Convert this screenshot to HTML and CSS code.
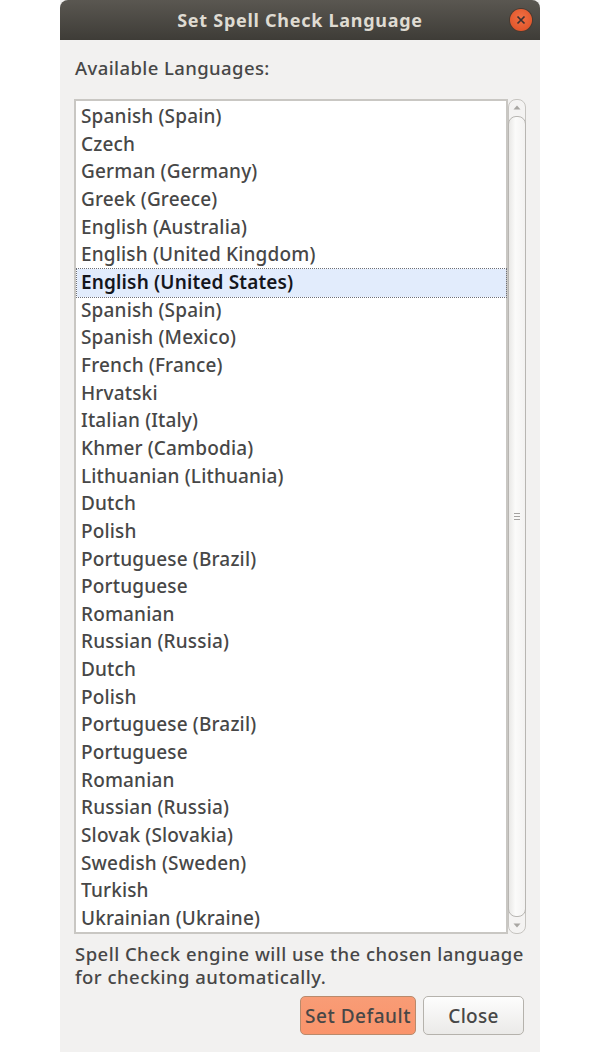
FILE: index.html
```html
<!DOCTYPE html>
<html lang="en">
<head>
<meta charset="utf-8">
<title>Set Spell Check Language</title>
<link rel="stylesheet" href="styles.css">
</head>
<body>
<div class="window">
  <header class="titlebar">
    <span class="title">Set Spell Check Language</span>
    <span class="close-btn">
      <svg width="10" height="10" viewBox="0 0 10 10"><path d="M1.5 1.5 8.5 8.5M8.5 1.5 1.5 8.5" stroke="#3c3030" stroke-width="1.7" fill="none"/></svg>
    </span>
  </header>
  <main class="content">
    <div class="heading">Available Languages:</div>
    <div class="list-row">
      <ul class="list">
        <li>Spanish (Spain)</li>
        <li>Czech</li>
        <li>German (Germany)</li>
        <li>Greek (Greece)</li>
        <li>English (Australia)</li>
        <li>English (United Kingdom)</li>
        <li class="selected">English (United States)</li>
        <li>Spanish (Spain)</li>
        <li>Spanish (Mexico)</li>
        <li>French (France)</li>
        <li>Hrvatski</li>
        <li>Italian (Italy)</li>
        <li>Khmer (Cambodia)</li>
        <li>Lithuanian (Lithuania)</li>
        <li>Dutch</li>
        <li>Polish</li>
        <li>Portuguese (Brazil)</li>
        <li>Portuguese</li>
        <li>Romanian</li>
        <li>Russian (Russia)</li>
        <li>Dutch</li>
        <li>Polish</li>
        <li>Portuguese (Brazil)</li>
        <li>Portuguese</li>
        <li>Romanian</li>
        <li>Russian (Russia)</li>
        <li>Slovak (Slovakia)</li>
        <li>Swedish (Sweden)</li>
        <li>Turkish</li>
        <li>Ukrainian (Ukraine)</li>
      </ul>
      <div class="scrollbar">
        <svg class="arrow" width="8" height="5" viewBox="0 0 8 5"><path d="M0.5 4.5 4 0.5 7.5 4.5Z" fill="#a8a6a2"/></svg>
        <div class="thumb">
          <span class="grip"></span><span class="grip"></span><span class="grip"></span>
        </div>
        <svg class="arrow" width="8" height="5" viewBox="0 0 8 5"><path d="M0.5 0.5 4 4.5 7.5 0.5Z" fill="#a8a6a2"/></svg>
      </div>
    </div>
    <p class="hint">Spell Check engine will use the chosen language<br>for checking automatically.</p>
    <div class="actions">
      <button class="btn btn-primary">Set Default</button>
      <button class="btn">Close</button>
    </div>
  </main>
</div>
</body>
</html>
```
FILE: styles.css
```css
* { box-sizing: border-box; }
html, body { margin: 0; padding: 0; background: #fff; }
body {
  width: 600px;
  height: 1052px;
  padding: 0 60px;
  font-family: "Noto Sans", "Open Sans", sans-serif;
  font-weight: 500;
  color: #474747;
}
.window {
  width: 480px;
  height: 1052px;
  background: #f2f1f0;
  display: flex;
  flex-direction: column;
}
.titlebar {
  height: 40px;
  flex: none;
  background: linear-gradient(#5a5751, #3e3c37);
  border-radius: 8px 8px 0 0;
  display: flex;
  align-items: center;
  justify-content: center;
  position: relative;
}
.title {
  font-size: 18px;
  font-weight: 700;
  color: #dfdbd2;
  letter-spacing: 0.72px;
}
.close-btn {
  position: absolute;
  right: 8px;
  top: 9px;
  width: 22px;
  height: 22px;
  border-radius: 50%;
  background: radial-gradient(circle at 50% 40%, #ef7044, #dd4d22);
  box-shadow: 0 0 0 1px #4a3a30;
  display: flex;
  align-items: center;
  justify-content: center;
}
.content {
  flex: 1;
  padding: 0 14px;
  display: flex;
  flex-direction: column;
}
.heading {
  font-size: 18.5px;
  line-height: 24px;
  margin-top: 16px;
  margin-left: 1px;
  letter-spacing: 0.4px;
}
.list-row {
  display: flex;
  margin-top: 19px;
  height: 835px;
}
.list {
  list-style: none;
  margin: 0;
  padding: 2px 0 0 1px;
  width: 434px;
  background: #fff;
  border: 2px solid #c9c7c3;
  font-size: 19px;
  letter-spacing: 0.16px;
}
.list li {
  height: 27.66px;
  line-height: 27.66px;
  padding-left: 4px;
  white-space: nowrap;
}
.list li.selected {
  background: #e2ecfc;
  color: #14161c;
  font-weight: 600;
  letter-spacing: 0.15px;
  outline: 1px dotted #6d6f78;
}
.scrollbar {
  width: 18px;
  border: 1px solid #c6c4c0;
  border-radius: 8px;
  background: #f4f3f2;
  display: flex;
  flex-direction: column;
  align-items: center;
  justify-content: space-between;
  padding: 5px 0;
}
.arrow { flex: none; }
.thumb {
  flex: 1;
  width: 18px;
  margin: 6px 0;
  background: linear-gradient(90deg, #e9e8e6, #fbfbfa 40%, #f3f2f1);
  border: 1px solid #b8b6b2;
  border-radius: 8px;
  display: flex;
  flex-direction: column;
  align-items: center;
  justify-content: center;
  gap: 2px;
}
.grip {
  width: 6px;
  height: 1px;
  background: #a4a2a0;
}
.hint {
  margin: 8px 0 0 1px;
  font-size: 18.5px;
  line-height: 23px;
  letter-spacing: 0.47px;
  white-space: nowrap;
}
.actions {
  display: flex;
  justify-content: flex-end;
  gap: 7px;
  margin-top: 8px;
  padding-right: 2px;
}
.btn {
  width: 101px;
  height: 39px;
  border: 1px solid #b5b2ac;
  border-radius: 5px;
  background: linear-gradient(#fdfdfd, #ebeae8);
  font-family: inherit;
  font-weight: 500;
  font-size: 19px;
  letter-spacing: 0.3px;
  color: #474747;
  padding: 0;
}
.btn-primary {
  width: 116px;
  background: linear-gradient(#f89c76, #fa946b);
  border-color: #b98a6c;
  letter-spacing: 0.5px;
}
```
